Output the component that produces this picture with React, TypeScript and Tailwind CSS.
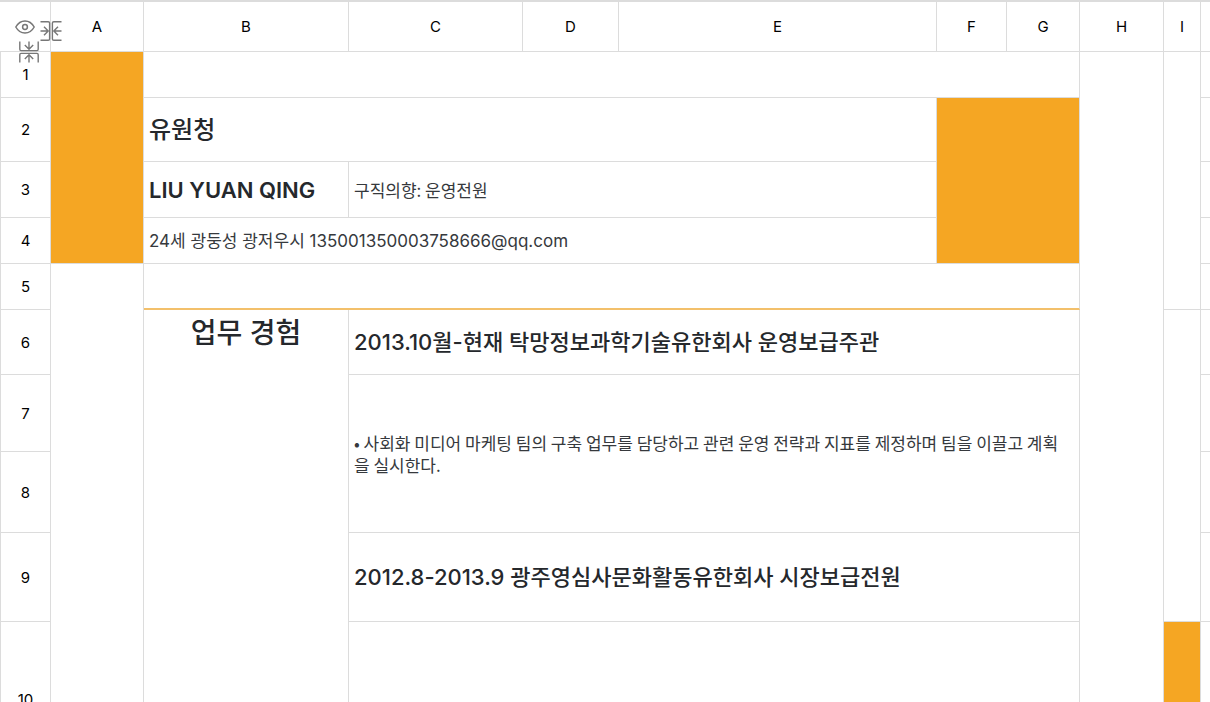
import type { ReactNode } from 'react';

import clsx from 'clsx';

type CellProps = {
  children?: ReactNode;
  className?: string;
  rows?: number;
  cols?: number;
};

const columns = [
  { name: 'A', width: 'w-[93px]' },
  { name: 'B', width: 'w-[205px]' },
  { name: 'C', width: 'w-[174px]' },
  { name: 'D', width: 'w-[96px]' },
  { name: 'E', width: 'w-[318px]' },
  { name: 'F', width: 'w-[70px]' },
  { name: 'G', width: 'w-[73px]' },
  { name: 'H', width: 'w-[84px]' },
  { name: 'I', width: 'w-[37px]' },
];

function Cell({ children, className, rows = 1, cols = 1 }: CellProps) {
  return (
    <td
      rowSpan={rows}
      colSpan={cols}
      className={clsx('border-r border-b pb-0 pl-[5px] last:border-r-0', className ?? 'border-[#dcdcdc]')}
    >
      {children}
    </td>
  );
}

function RowHeader({ index }: { index: number }) {
  return (
    <th scope="row" className="border-x border-b border-[#dcdcdc] p-0 pt-0.5 text-[15px] font-normal text-black">
      {index}
    </th>
  );
}

function EyeIcon() {
  return (
    <svg width="20" height="14" viewBox="0 0 20 14" fill="none" stroke="#777777" strokeWidth="1.5">
      <path d="M0.8 7C3 3 6.3 0.9 10 0.9S17 3 19.2 7C17 11 13.7 13.1 10 13.1S3 11 0.8 7Z" />
      <circle cx="10" cy="7" r="2.4" />
    </svg>
  );
}

function CollapseIcon({ className }: { className?: string }) {
  return (
    <svg
      width="22"
      height="20"
      viewBox="0 0 22 20"
      fill="none"
      stroke="#777777"
      strokeWidth="1.4"
      className={className}
    >
      <path d="M0.5 0.8H8.2Q9.6 0.8 9.6 2V18Q9.6 19.2 8.2 19.2H0.5" />
      <path d="M21.5 0.8H13.8Q12.4 0.8 12.4 2V18Q12.4 19.2 13.8 19.2H21.5" />
      <path d="M0.5 10H8M4 5.8L8.2 10L4 14.2" />
      <path d="M21.5 10H14M18 5.8L13.8 10L18 14.2" />
    </svg>
  );
}

export default function App() {
  return (
    <main className="h-screen overflow-hidden bg-white font-['Inter','Noto_Sans_CJK_KR',sans-serif] text-[#25282c]">
      <table className="w-full table-fixed border-separate border-spacing-0 border-t-2 border-[#dcdcdc]">
        <colgroup>
          <col className="w-[51px]" />
          {columns.map((column) => (
            <col key={column.name} className={column.width} />
          ))}
          <col />
        </colgroup>

        <thead>
          <tr className="h-[50px] text-[15px] text-black">
            <th className="relative border-r border-b border-[#dcdcdc] p-0">
              <button aria-label="Show hidden cells" className="mx-auto block">
                <EyeIcon />
              </button>
              <button aria-label="Collapse columns" className="absolute top-[19px] left-[40px]">
                <CollapseIcon />
              </button>
              <button aria-label="Collapse rows" className="absolute top-[40px] left-[18px]">
                <CollapseIcon className="rotate-90" />
              </button>
            </th>
            {columns.map((column) => (
              <th key={column.name} scope="col" className="border-r border-b border-[#dcdcdc] p-0 pt-0.5 font-normal">
                {column.name}
              </th>
            ))}
            <th className="border-b border-[#dcdcdc] p-0" />
          </tr>
        </thead>

        <tbody>
          <tr className="h-[46px]">
            <RowHeader index={1} />
            <Cell rows={4} className="border-[#dcdcdc] bg-[#f5a623]" />
            <Cell cols={6} />
            <Cell rows={10} />
            <Cell rows={5} />
            <Cell />
          </tr>
          <tr className="h-[64px]">
            <RowHeader index={2} />
            <Cell cols={4} className="border-[#dcdcdc] text-2xl font-medium">
              유원청
            </Cell>
            <Cell cols={2} rows={3} className="border-[#dcdcdc] bg-[#f5a623]" />
            <Cell />
          </tr>
          <tr className="h-[56px]">
            <RowHeader index={3} />
            <Cell className="border-[#dcdcdc] pt-0.5 text-[22px] font-semibold whitespace-nowrap">LIU YUAN QING</Cell>
            <Cell
              cols={3}
              className="border-[#dcdcdc] pt-0 font-['Noto_Sans_CJK_KR',sans-serif] text-[17px] leading-[22px] text-[#36393d]"
            >
              구직의향: 운영전원
            </Cell>
            <Cell />
          </tr>
          <tr className="h-[46px]">
            <RowHeader index={4} />
            <Cell cols={4} className="border-[#dcdcdc] pt-0.5 text-[17px] text-[#36393d]">
              24세 광둥성 광저우시 135001350003758666@qq.com
            </Cell>
            <Cell />
          </tr>
          <tr className="h-[46px]">
            <RowHeader index={5} />
            <Cell rows={6} />
            <Cell cols={6} className="border-r-[#dcdcdc] border-b-2 border-b-[#f3c06b]" />
            <Cell />
          </tr>
          <tr className="h-[65px]">
            <RowHeader index={6} />
            <Cell
              rows={5}
              className="border-[#dcdcdc] pr-[5px] text-center align-top text-[28px] leading-[46px] font-medium"
            >
              업무 경험
            </Cell>
            <Cell cols={5} className="border-[#dcdcdc] text-[22px] font-medium">
              2013.10월-현재 탁망정보과학기술유한회사 운영보급주관
            </Cell>
            <Cell rows={4} />
            <Cell />
          </tr>
          <tr className="h-[77px]">
            <RowHeader index={7} />
            <Cell
              cols={5}
              rows={2}
              className="border-[#dcdcdc] pt-0 pr-4 font-['Noto_Sans_CJK_KR',sans-serif] text-[17px] leading-[22px] text-[#36393d]"
            >
              • 사회화 미디어 마케팅 팀의 구축 업무를 담당하고 관련 운영 전략과 지표를 제정하며 팀을 이끌고 계획을
              실시한다.
            </Cell>
            <Cell />
          </tr>
          <tr className="h-[81px]">
            <RowHeader index={8} />
            <Cell />
          </tr>
          <tr className="h-[89px]">
            <RowHeader index={9} />
            <Cell cols={5} className="border-[#dcdcdc] text-[22px] font-medium">
              2012.8-2013.9 광주영심사문화활동유한회사 시장보급전원
            </Cell>
            <Cell />
          </tr>
          <tr className="h-[156px]">
            <RowHeader index={10} />
            <Cell cols={5} />
            <Cell className="border-[#dcdcdc] bg-[#f5a623]" />
            <Cell />
          </tr>
        </tbody>
      </table>
    </main>
  );
}
